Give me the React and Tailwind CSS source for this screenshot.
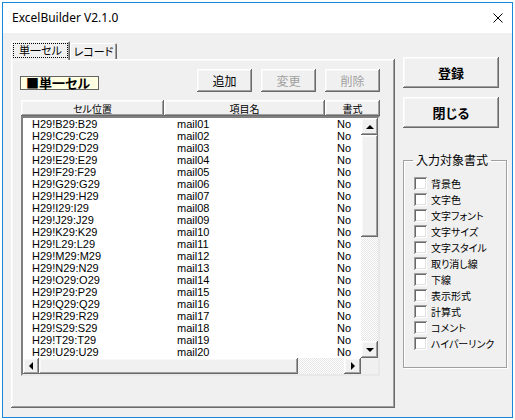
import React from "react";

const jp = "font-['MS_UI_Gothic','Noto_Sans_CJK_JP',sans-serif] [font-feature-settings:'palt']";

// classic win32 3d edges
const raised =
  "bg-[#f0f0f0] shadow-[inset_-1px_-1px_0_#696969,inset_1px_1px_0_#ffffff,inset_-2px_-2px_0_#a0a0a0,inset_2px_2px_0_#f8f8f8]";
const sunkenBox =
  "bg-white shadow-[inset_1px_1px_0_#a0a0a0,inset_-1px_-1px_0_#ffffff,inset_2px_2px_0_#696969,inset_-2px_-2px_0_#e3e3e3]";
const hatch =
  "bg-[repeating-conic-gradient(#ffffff_0%_25%,#e6e6e6_0%_50%)] bg-[length:2px_2px]";

const cols = "BCDEFGHIJKLMNOPQRSTU".split("");
const rows = cols.map((c, i) => ({
  cell: `H29!${c}29:${c}29`,
  name: "mail" + String(i + 1).padStart(2, "0"),
  fmt: "No",
}));

const formats = [
  "背景色",
  "文字色",
  "文字フォント",
  "文字サイズ",
  "文字スタイル",
  "取り消し線",
  "下線",
  "表示形式",
  "計算式",
  "コメント",
  "ハイパーリンク",
];

function Arrow({ dir }) {
  const pts = {
    up: "1,5 5,1 9,5",
    down: "1,1 5,5 9,1",
    left: "5,1 1,5 5,9",
    right: "1,1 5,5 1,9",
  }[dir];
  const size = dir === "up" || dir === "down" ? "w-[10px] h-[6px]" : "w-[6px] h-[10px]";
  const vb = dir === "up" || dir === "down" ? "0 0 10 6" : "0 0 6 10";
  return (
    <svg viewBox={vb} className={size}>
      <polygon points={pts} fill="#000" />
    </svg>
  );
}

function ScrollBtn({ dir, className = "" }) {
  return (
    <div className={`${raised} flex items-center justify-center shrink-0 ${className}`}>
      <Arrow dir={dir} />
    </div>
  );
}

function Button({ children, disabled, className = "" }) {
  return (
    <div
      className={`${raised} flex items-center justify-center ${jp} ${
        disabled ? "text-[#a0a0a0]" : "text-black"
      } ${className}`}
    >
      {children}
    </div>
  );
}

export default function App() {
  return (
    <div className="w-[515px] h-[420px] bg-white pt-[2px] pl-[2px] overflow-hidden">
      <div className="w-[511px] h-[416px] border border-[#1a86d9] bg-[#f0f0f0] flex flex-col">
        {/* title bar */}
        <div className="h-[30px] bg-white flex items-center justify-between pl-[9px] pr-[9px] shrink-0">
          <span className="font-['Noto_Sans',sans-serif] text-[12px] text-black">ExcelBuilder V2.1.0</span>
          <svg viewBox="0 0 10 10" className="w-[10px] h-[10px]">
            <path d="M0.5 0.5 L9.5 9.5 M9.5 0.5 L0.5 9.5" stroke="#000" strokeWidth="1" />
          </svg>
        </div>

        <div className="flex pl-[8px] pt-[8px]">
          {/* left: tabs + page */}
          <div className="w-[384px] flex flex-col">
            <div className="flex items-end h-[18px]">
              <div
                className={`relative z-10 -mb-px w-[59px] h-[19px] bg-[#f0f0f0] rounded-t-[2px] shadow-[inset_1px_1px_0_#ffffff,inset_-1px_0_0_#696969,inset_-2px_0_0_#a0a0a0] flex items-center justify-center ${jp} text-[11px]`}
              >
                <span className="border border-dotted border-black px-[3px] leading-[13px] w-[55px] text-center">単一セル</span>
              </div>
              <div
                className={`w-[47px] h-[16px] bg-[#f0f0f0] rounded-t-[2px] shadow-[inset_1px_1px_0_#ffffff,inset_-1px_0_0_#696969,inset_-2px_0_0_#a0a0a0] flex items-center justify-center ${jp} text-[11px]`}
              >
                レコード
              </div>
            </div>

            <div className={`${raised} h-[349px] pl-[9px] pt-[10px]`}>
              <div className="flex h-[23px]">
                <div
                  className={`w-[79px] h-[14px] mt-[7px] border border-[#646464] bg-[#ffffe1] ${jp} font-bold text-[13px] leading-[12px] pl-[5px] text-black`}
                >
                  ■単一セル
                </div>
                <div className="flex gap-[9px] ml-[98px]">
                  <Button className="w-[55px] h-[23px] text-[12px]">追加</Button>
                  <Button disabled className="w-[55px] h-[23px] text-[12px]">変更</Button>
                  <Button disabled className="w-[55px] h-[23px] text-[12px]">削除</Button>
                </div>
              </div>

              {/* list view */}
              <div className="mt-[8px] ml-[1px] w-[359px]">
                <div className={`flex h-[16px] ${jp} text-[10px] text-black`}>
                  <div className={`${raised} w-[143px] flex items-center justify-center`}>セル位置</div>
                  <div className={`${raised} w-[161px] flex items-center justify-center`}>項目名</div>
                  <div className={`${raised} w-[55px] flex items-center justify-center`}>書式</div>
                </div>
                <div className="h-[260px] border-2 border-t-[#808080] border-l-[#808080] border-r-[#e8e8e8] border-b-[#e8e8e8] bg-white flex flex-col">
                  <div className="flex h-[240px]">
                    <div className="w-[338px] overflow-hidden font-['Liberation_Sans',Arial,sans-serif] text-[11px] text-black">
                      {rows.map((r) => (
                        <div key={r.cell} className="flex h-[12px] leading-[12px] whitespace-nowrap">
                          <div className="w-[141px] pl-[9px]">{r.cell}</div>
                          <div className="w-[161px] pl-[13px]">{r.name}</div>
                          <div className="pl-[12px]">{r.fmt}</div>
                        </div>
                      ))}
                    </div>
                    <div className="w-[17px] flex flex-col">
                      <ScrollBtn dir="up" className="h-[17px]" />
                      <div className={`${raised} h-[102px]`} />
                      <div className={`flex-1 ${hatch}`} />
                      <ScrollBtn dir="down" className="h-[17px]" />
                    </div>
                  </div>
                  <div className="flex h-[16px]">
                    <div className="w-[338px] flex">
                      <ScrollBtn dir="left" className="w-[16px]" />
                      <div className={`${raised} w-[259px]`} />
                      <div className={`flex-1 ${hatch}`} />
                      <ScrollBtn dir="right" className="w-[17px]" />
                    </div>
                    <div className="w-[17px] bg-[#f0f0f0]" />
                  </div>
                </div>
              </div>
            </div>
          </div>

          {/* right column */}
          <div className="ml-[8px] pt-[16px] flex flex-col">
            <Button className="w-[96px] h-[31px] text-[13px] font-bold">登録</Button>
            <Button className="w-[96px] h-[31px] text-[13px] font-bold mt-[9px]">閉じる</Button>

            <fieldset className="mt-[24px] w-[104px] h-[216px] border border-[#a0a0a0] shadow-[inset_1px_1px_0_#ffffff,1px_1px_0_#ffffff]">
              <legend className={`ml-[9px] px-[3px] ${jp} text-[12px] leading-[16px] text-black`}>
                入力対象書式
              </legend>
              <div className="flex flex-col gap-[3px] pt-[9px] pl-[10px]">
                {formats.map((f) => (
                  <div key={f} className="flex items-center h-[13px] gap-[4px]">
                    <div className={`w-[13px] h-[13px] ${sunkenBox} shrink-0`} />
                    <span className={`${jp} text-[10px] leading-[13px] whitespace-nowrap text-black`}>{f}</span>
                  </div>
                ))}
              </div>
            </fieldset>
          </div>
        </div>
      </div>
    </div>
  );
}
